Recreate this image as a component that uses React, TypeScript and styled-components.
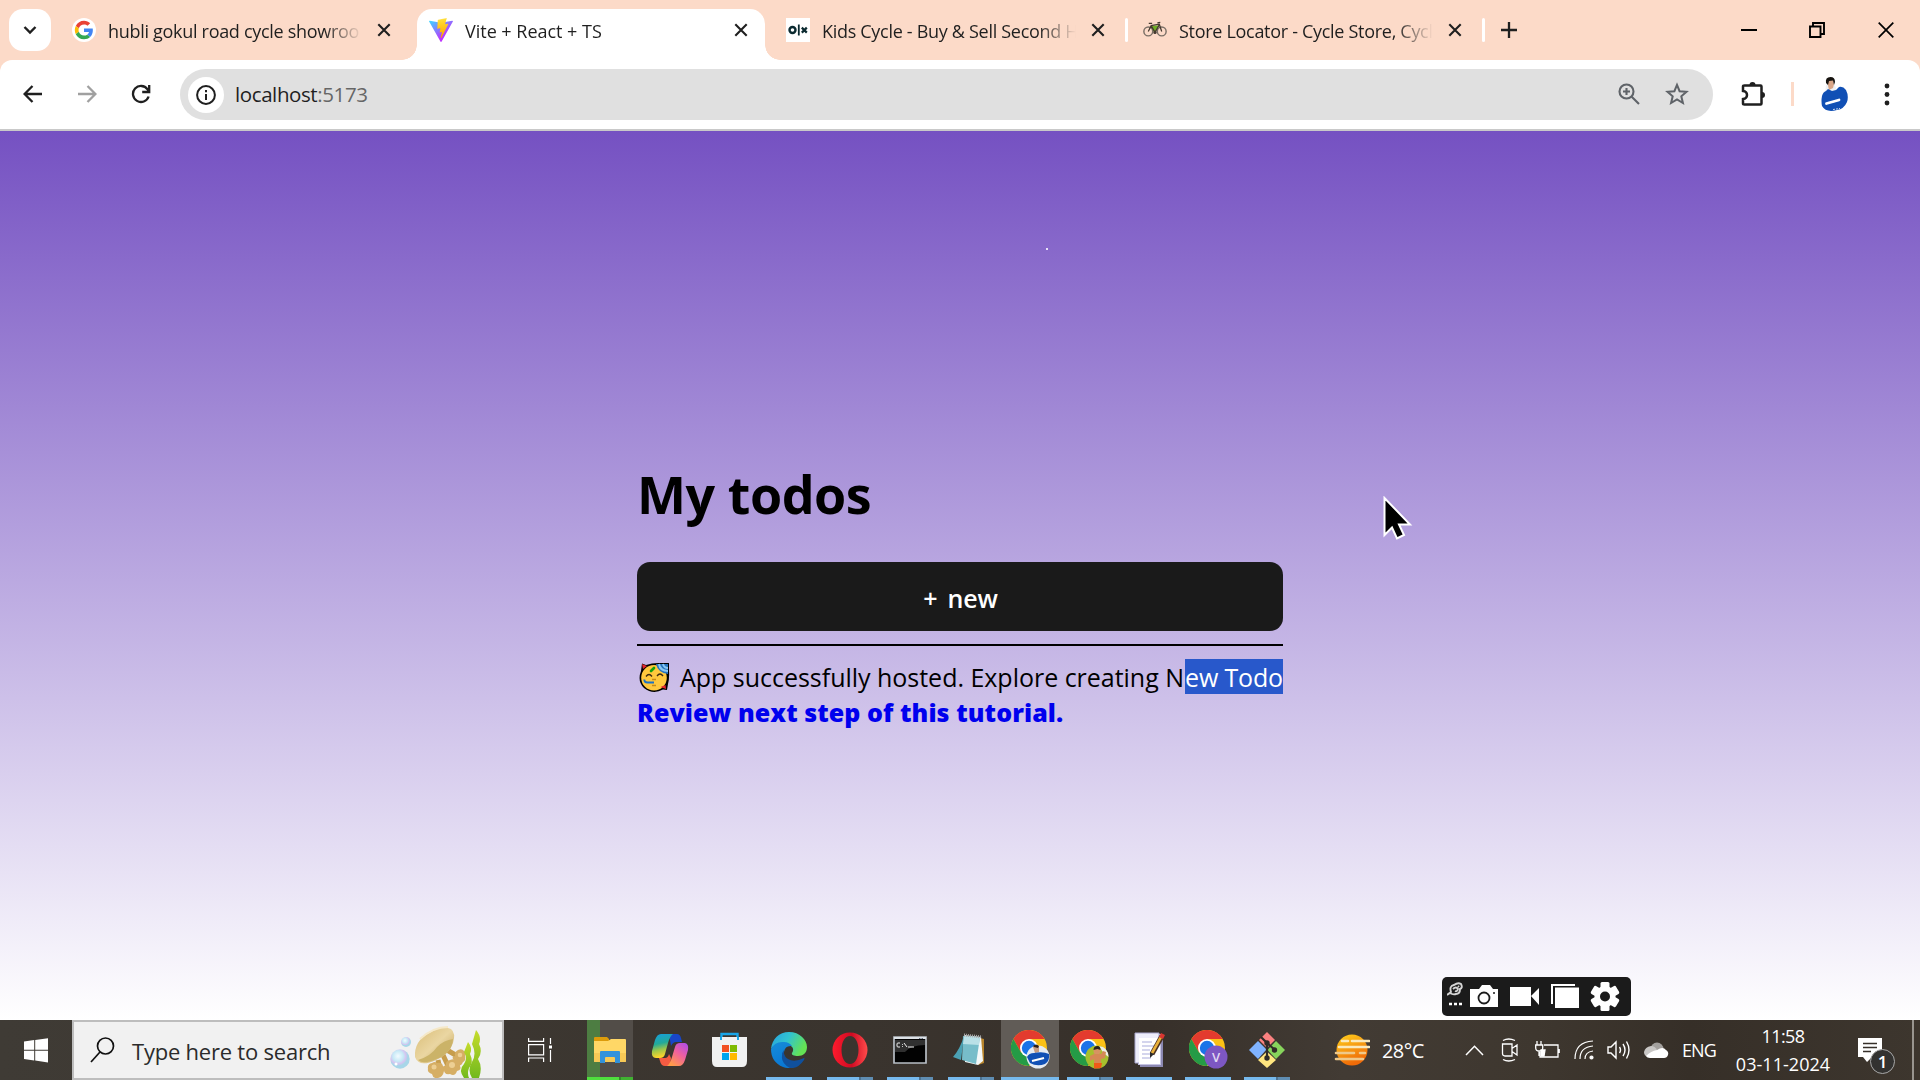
import React from "react";
import styled, { createGlobalStyle } from "styled-components";

const GlobalStyle = createGlobalStyle`
  *, *::before, *::after { box-sizing: border-box; }
  body { margin: 0; overflow: hidden; }
  svg { display: block; flex: none; }
`;

const Screen = styled.div`
  display: flex;
  flex-direction: column;
  width: 1920px;
  height: 1080px;
  overflow: hidden;
  font-family: "Open Sans", "Noto Sans", sans-serif;
  color: #1f1f1f;
`;

/* ---------- tab strip ---------- */

const TabStrip = styled.header`
  display: flex;
  height: 60px;
  padding-left: 9px;
  background: #fcdac8;
`;

const TabSearch = styled.button`
  display: grid;
  place-items: center;
  width: 42px;
  height: 42px;
  margin: 9px 9px 0 0;
  padding: 0;
  border: 0;
  border-radius: 14px;
  background: #fff;
`;

const TabSlot = styled.div<{ $active?: boolean }>`
  position: relative;
  display: flex;
  align-items: center;
  width: ${(p) => (p.$active ? 348 : 357)}px;
  height: 51px;
  margin: 9px ${(p) => (p.$active ? 9 : 0)}px 0 0;
  padding: 0 0 9px 12px;
  border-radius: 15px 15px 0 0;
  background: ${(p) => (p.$active ? "#fff" : "transparent")};
  ${(p) =>
    p.$active &&
    `
    &::before, &::after {
      content: "";
      position: absolute;
      bottom: 0;
      width: 15px;
      height: 15px;
    }
    &::before { left: -15px; background: radial-gradient(circle at 0 0, transparent 14.5px, #fff 15px); }
    &::after { right: -15px; background: radial-gradient(circle at 100% 0, transparent 14.5px, #fff 15px); }
  `}
`;

const TabTitle = styled.span<{ $spacing: number }>`
  width: 254px;
  margin: 2px 15px 0 12px;
  overflow: hidden;
  white-space: nowrap;
  font-size: 18px;
  line-height: 26px;
  letter-spacing: ${(p) => p.$spacing}px;
  mask-image: linear-gradient(90deg, #000 216px, transparent 254px);
`;

const TabDivider = styled.i`
  width: 3px;
  height: 24px;
  margin-left: 20px;
  border-radius: 2px;
  background: #fff;
`;

const NewTab = styled.div`
  display: grid;
  place-items: center;
  width: 42px;
  height: 42px;
  margin-top: 9px;
`;

const WindowButtons = styled.div`
  display: flex;
  margin-left: auto;
`;

const WindowButton = styled.div`
  display: grid;
  place-items: center;
  width: 68.5px;
  height: 59px;
`;

/* ---------- toolbar ---------- */

const ToolbarBack = styled.div`
  background: #fcdac8;
`;

const Toolbar = styled.nav`
  display: flex;
  align-items: center;
  height: 71px;
  padding: 0 0 2px;
  border-bottom: 2px solid #c9c9c9;
  border-radius: 12px 12px 0 0;
  background: #fff;
`;

const NavButtons = styled.div`
  display: flex;
  width: 180px;
  padding: 1px 0 0 6px;
`;

const NavButton = styled.div`
  display: grid;
  place-items: center;
  width: 54px;
  height: 54px;
`;

const AddressBar = styled.div`
  display: flex;
  align-items: center;
  width: 1533px;
  height: 51px;
  margin-top: 2px;
  padding: 0 24px 0 8px;
  border-radius: 26px;
  background: #e0e0e0;
`;

const SiteInfo = styled.div`
  display: grid;
  place-items: center;
  width: 36px;
  height: 36px;
  margin-right: 11px;
  border-radius: 50%;
  background: #fff;
`;

const Url = styled.span`
  flex: 1;
  margin-top: -2px;
  font-size: 20.5px;
  letter-spacing: -0.4px;
  line-height: 30px;
  em { font-style: normal; color: #666; }
`;

const AddressIcons = styled.div`
  display: flex;
  gap: 24px;
  margin-top: -1px;
`;

const ToolbarEnd = styled.div`
  display: flex;
  align-items: center;
  margin-left: 27px;
`;

const ToolbarDivider = styled.i`
  width: 3px;
  height: 24px;
  margin: 0 26px 0 25px;
  background: #fcdac8;
`;

/* ---------- page ---------- */

const Page = styled.main`
  position: relative;
  height: 889px;
  padding-top: 328px;
  background: linear-gradient(180deg, rgb(117, 81, 194), rgb(255, 255, 255));
  color: #000;
`;

const Todos = styled.section`
  display: flex;
  flex-direction: column;
  width: 646px;
  margin: 0 auto;
`;

const Heading = styled.h1`
  margin: 0 0 33px;
  font-size: 52px;
  font-weight: 700;
  line-height: 70px;
  letter-spacing: -0.45px;
`;

const NewButton = styled.button`
  height: 69px;
  margin-bottom: 13px;
  padding: 2px 0 0 1px;
  border: 0;
  border-radius: 13px;
  background: #1a1a1a;
  color: #fff;
  font: 600 25px/36px "Open Sans", sans-serif;
  letter-spacing: -0.1px;
  span { margin-right: 10px; }
`;

const Rule = styled.hr`
  width: 100%;
  height: 2px;
  margin: 0 0 13px;
  border: 0;
  background: #000;
`;

const Message = styled.div`
  display: flex;
  height: 35px;
  font-size: 25px;
  line-height: 37px;
  letter-spacing: -0.02px;
  white-space: pre;
  svg { margin: 3px 10px 0 2px; }
`;

const Selected = styled.span`
  width: 98px;
  margin-left: auto;
  background: #2858cb;
  color: #fff;
  letter-spacing: -0.15px;
`;

const Tutorial = styled.a`
  height: 35px;
  color: #0000ee;
  font-size: 25px;
  font-weight: 800;
  line-height: 37px;
  white-space: nowrap;
  letter-spacing: 0.07px;
`;

const Speck = styled.i`
  position: absolute;
  left: 1046px;
  top: 117px;
  width: 2px;
  height: 2px;
  background: #e9e2f7;
`;

const Cursor = styled.svg`
  position: absolute;
  left: 1383px;
  top: 365px;
`;

const Recorder = styled.div`
  position: absolute;
  left: 1442px;
  top: 846px;
  display: flex;
  align-items: center;
  width: 189px;
  height: 39px;
  padding-left: 5px;
  border-radius: 5px;
  background: #1b1b1b;
`;

/* ---------- taskbar ---------- */

const Taskbar = styled.footer`
  display: flex;
  height: 60px;
  background: linear-gradient(90deg, #3f3b35, #3a342e 45%, #37302a 60%, #423b34 70%, #3e372f 80%, #362f28 88%, #3d362e);
  color: #fff;
`;

const Start = styled.div`
  display: grid;
  place-items: center;
  width: 72px;
  height: 60px;
`;

const SearchBox = styled.div`
  display: flex;
  align-items: center;
  width: 432px;
  height: 60px;
  padding-left: 16px;
  border: 2px solid #bdbdbd;
  background: #f1f1f1;
  color: #2b2b2b;
`;

const SearchText = styled.span`
  width: 258px;
  margin: 1px 0 0 17px;
  font-size: 22px;
  line-height: 32px;
  letter-spacing: -0.22px;
  white-space: nowrap;
`;

const TaskView = styled.div`
  display: grid;
  place-items: center;
  width: 72px;
  margin-right: 4px;
`;

const TaskCell = styled.div<{ $width: number; $active?: boolean }>`
  display: flex;
  flex-direction: column;
  align-items: center;
  justify-content: space-between;
  width: ${(p) => p.$width}px;
  height: 60px;
  background: ${(p) => (p.$active ? "#615c57" : "transparent")};
`;

const FolderCell = styled(TaskCell)`
  margin: 0 7px;
  background: linear-gradient(90deg, #4d7d42 13px, #524d48 13px);
`;

const AppIcon = styled.div`
  display: grid;
  place-items: center;
  height: 57px;
  padding-top: 3px;
`;

const Underline = styled.i<{ $kind: "none" | "one" | "many" | "full" | "green" }>`
  width: ${(p) => (p.$kind === "full" ? 58 : 46)}px;
  height: 3px;
  background: ${(p) =>
    ({
      none: "transparent",
      one: "#76b9ed",
      full: "#76b9ed",
      many: "linear-gradient(90deg, #76b9ed 32px, #4c7291 32px, #4c7291 34px, #5f8db2 34px)",
      green: "linear-gradient(90deg, #4fdf3e 32px, #338c2a 32px, #338c2a 34px, #40b232 34px)",
    })[p.$kind]};
`;

const Weather = styled.div`
  display: flex;
  align-items: center;
  gap: 12px;
  margin-left: 38px;
  width: 131px;
  font-size: 20px;
  letter-spacing: -0.6px;
  white-space: nowrap;
`;

const Tray = styled.div`
  display: flex;
  align-items: center;
  gap: 13.5px;
  width: 217px;
`;

const Language = styled.span`
  width: 54px;
  font-size: 18px;
  line-height: 60px;
  letter-spacing: -0.9px;
`;

const Clock = styled.div`
  display: flex;
  flex-direction: column;
  width: 94px;
  align-items: center;
  padding-top: 2px;
  font-size: 18px;
  line-height: 28px;
  letter-spacing: -0.6px;
  white-space: nowrap;
`;

const DateText = styled.span`
  letter-spacing: 0.05px;
`;

const Notifications = styled.div`
  position: relative;
  margin: 18px 0 0 28px;
`;

const Badge = styled.span`
  position: absolute;
  left: 12px;
  top: 11px;
  display: grid;
  place-items: center;
  width: 25px;
  height: 25px;
  border: 1px solid #a8a8a8;
  border-radius: 50%;
  background: #333230;
  font-size: 17px;
  font-weight: 600;
`;

const DesktopEdge = styled.i`
  width: 2px;
  height: 60px;
  margin: 0 6px 0 auto;
  background: #99958f;
`;

/* ---------- drawings ---------- */

const Close = () => (
  <svg width="14" height="14" viewBox="0 0 14 14" stroke="#1f1f1f" strokeWidth="2.1">
    <path d="M1.3 1.3 12.7 12.7M12.7 1.3 1.3 12.7" />
  </svg>
);

const GoogleIcon = () => (
  <svg width="24" height="24" viewBox="0 0 24 24">
    <circle cx="12" cy="12" r="12" fill="#fff" />
    <g transform="translate(2.8 2.8) scale(.384)">
      <path fill="#EA4335" d="M24 9.5c3.54 0 6.71 1.22 9.21 3.6l6.85-6.85C35.9 2.38 30.47 0 24 0 14.62 0 6.51 5.38 2.56 13.22l7.98 6.19C12.43 13.72 17.74 9.5 24 9.5z" />
      <path fill="#4285F4" d="M46.98 24.55c0-1.57-.15-3.09-.38-4.55H24v9.02h12.94c-.58 2.96-2.26 5.48-4.78 7.18l7.73 6c4.51-4.18 7.09-10.36 7.09-17.65z" />
      <path fill="#FBBC05" d="M10.53 28.59c-.48-1.45-.76-2.99-.76-4.59s.27-3.14.76-4.59l-7.98-6.19C.92 16.46 0 20.12 0 24c0 3.88.92 7.54 2.56 10.78l7.97-6.19z" />
      <path fill="#34A853" d="M24 48c6.48 0 11.93-2.13 15.89-5.81l-7.73-6c-2.15 1.45-4.92 2.3-8.16 2.3-6.26 0-11.57-4.22-13.47-9.91l-7.98 6.19C6.51 42.62 14.62 48 24 48z" />
    </g>
  </svg>
);

const ViteIcon = () => (
  <svg width="24" height="24" viewBox="0 0 256 257">
    <defs>
      <linearGradient id="viteA" x1="0" x2=".58" y1=".08" y2=".78">
        <stop offset="0" stopColor="#41D1FF" />
        <stop offset="1" stopColor="#BD34FE" />
      </linearGradient>
      <linearGradient id="viteB" x1=".43" x2=".5" y1=".02" y2=".89">
        <stop offset="0" stopColor="#FFEA83" />
        <stop offset=".08" stopColor="#FFDD35" />
        <stop offset="1" stopColor="#FFA800" />
      </linearGradient>
    </defs>
    <path fill="url(#viteA)" d="M255.153 37.938 134.897 252.976c-2.483 4.44-8.862 4.466-11.382.048L.875 37.958c-2.746-4.814 1.371-10.646 6.827-9.67l120.385 21.517a6.537 6.537 0 0 0 2.322-.004l117.867-21.483c5.438-.991 9.574 4.796 6.877 9.62Z" />
    <path fill="url(#viteB)" d="M185.432.063 96.44 17.501a3.268 3.268 0 0 0-2.634 3.014l-5.474 92.456a3.268 3.268 0 0 0 3.997 3.378l24.777-5.718c2.318-.535 4.413 1.507 3.936 3.838l-7.361 36.047c-.495 2.426 1.782 4.5 4.151 3.78l15.304-4.649c2.372-.72 4.652 1.36 4.15 3.788l-11.698 56.621c-.732 3.542 3.979 5.473 5.943 2.437l1.313-2.028 72.516-144.72c1.215-2.423-.88-5.186-3.54-4.672l-25.505 4.922c-2.396.462-4.435-1.77-3.759-4.114l16.646-57.705c.677-2.35-1.37-4.583-3.769-4.113Z" />
  </svg>
);

const OlxIcon = () => (
  <svg width="24" height="24" viewBox="0 0 24 24">
    <path fill="#fff" d="M0 0h24v24H0z" />
    <circle cx="6.5" cy="12" r="3" fill="none" stroke="#0b2a30" strokeWidth="2.4" />
    <path d="M12.8 6.5v11" stroke="#0b2a30" strokeWidth="1.8" />
    <path d="m15.8 9.6 5 5m0-5-5 5" stroke="#0b2a30" strokeWidth="2.2" />
  </svg>
);

const BikeIcon = () => (
  <svg width="24" height="24" viewBox="0 0 25 24" fill="none">
    <circle cx="5.5" cy="13.5" r="4.6" stroke="#7a6f66" strokeWidth="1.5" />
    <circle cx="19.5" cy="13.5" r="4.6" stroke="#7a6f66" strokeWidth="1.5" />
    <path d="m8 8 9-1-5 8z" fill="#6fae24" />
    <path d="m5.500 13.500 3-6 8.500-1.500 2.500 7.500M8.500 7.500l4 7 4.500-8M6 5h3.500M15 4.500l3-.5" stroke="#45392f" strokeWidth="1.300" />
    <circle cx="12.500" cy="14.500" r="1.700" fill="#45392f" />
  </svg>
);

const Avatar = () => (
  <svg width="28" height="36" viewBox="0 0 28 36">
    <path d="M6 9q6-6 10 3v6H5z" fill="#eef1f5" />
    <path d="M7 5q3-4 6-1l1 4-1 4-4 2z" fill="#d9a688" />
    <path d="M6 7q-1-6 4.500-6Q15 1 15 6l-1 3-1-4.500L9 5 8 9z" fill="#16130f" />
    <path d="M2 20q1-4 4-5l2-2 4 2 4-1 3-3q4-1 7 3 3 6 1 12-3 7-10 8-11 3-15-4-1-5 0-10z" fill="#1150b5" />
    <path d="m6.500 27.500 12.500-3.500" stroke="#fff" strokeWidth="2.800" strokeLinecap="round" />
    <path d="m13 33.500 7-1" stroke="#c9d8ef" strokeWidth="1" strokeDasharray="2 1" />
  </svg>
);

const PartyFace = () => (
  <svg width="31" height="31" viewBox="0 0 31 31">
    <path d="M3 1.500 7 3Q14 .500 22 1h8v8q.500 8-1 13l-1 6-4-.500Q14 33 5 26-2 19 2 9z" fill="#000" />
    <circle cx="15" cy="15.800" r="12.800" fill="#ffc83d" />
    <path d="m3 2 5 2-4 3zM21.500 25l5-2 .500 4z" fill="#e6262d" />
    <path d="M17 2h12v10Q19 11 17 2z" fill="#2673bd" />
    <path d="M20 2q1 7 9 7M24 2q1 4 5 4" stroke="#8bc7f0" strokeWidth="2" fill="none" />
    <path d="m12 9 3-3" stroke="#13a10e" strokeWidth="2.600" strokeLinecap="round" />
    <path d="M7 14.500q3-4 6 0M18 14q3-4 6 0" stroke="#3d2b12" strokeWidth="1.300" fill="none" />
    <path d="M15 20.500H8.500q-3.500 0-3-3" stroke="#1c72c4" strokeWidth="2" fill="none" />
    <path d="M13 17.500h4M13 23.500h4" stroke="#c88a15" strokeWidth="1.300" />
  </svg>
);

const SearchArt = () => (
  <svg width="92" height="56" viewBox="0 0 92 56">
    <defs>
      <radialGradient id="bubble" cx=".4" cy=".35">
        <stop offset="0" stopColor="#f3fbff" />
        <stop offset=".55" stopColor="#c6e9f6" />
        <stop offset=".8" stopColor="#d5c4f0" />
        <stop offset="1" stopColor="#a7d6e8" />
      </radialGradient>
      <linearGradient id="cap" x2="1" y2="1">
        <stop stopColor="#d9bc75" />
        <stop offset=".5" stopColor="#ead6a2" />
        <stop offset="1" stopColor="#bd9c50" />
      </linearGradient>
      <linearGradient id="weed" y2="1" x2="0">
        <stop stopColor="#c6dc2c" />
        <stop offset="1" stopColor="#72b91e" />
      </linearGradient>
    </defs>
    <circle cx="10" cy="37" r="9.700" fill="url(#bubble)" />
    <circle cx="16" cy="20" r="5" fill="url(#bubble)" />
    <circle cx="6" cy="42" r="1.500" fill="#fff" />
    <path d="m48 38 2 10M53 33l6 13M57 28l17 10" stroke="#c79d4c" strokeWidth="5" />
    <path d="M25 35q-1-16 14-24 13-8 22-4 5 4 2 14-4 12-17 17-17 8-21-3z" fill="url(#cap)" />
    <path d="M28 38q13-4 19-13 7-7 16-8-1 14-17 20-13 6-18 1z" fill="#cbb368" />
    <path d="M30 17Q43 5 58 5" stroke="#f5e8c8" strokeWidth="2" fill="none" />
    <g fill="#d6ae64">
      <path d="M42 41q3-2 5 0 5-1 6 3 4 2 1 5-1 6-6 7-5 1-6-4-5-2-4-5-1-5 4-6z" />
      <path d="M60 38q4-2 7 1 4 1 3 5 2 4-3 5-2 6-7 3-6 1-6-4-2-4 2-5-1-4 4-5z" />
      <path d="M68 28q4-2 6 1 3 2 1 5 1 5-2 6-2 5-6 3l-2-4q-5-4 0-5-1-4 3-6z" />
    </g>
    <g fill="#edcf93">
      <circle cx="44" cy="45" r="2.500" /><circle cx="62" cy="43" r="3" /><circle cx="70" cy="33" r="2.300" />
    </g>
    <path d="M74 56q-6-8 0-14 4-6 0-12l4-10q5 6 2 12 4 8-1 14-2 5 0 10z" fill="url(#weed)" />
    <path d="M82 56q-5-8 0-16t0-18l4-14q6 7 3 14 4 8-1 15 5 8 1 19z" fill="url(#weed)" />
  </svg>
);

const FolderIcon = () => (
  <svg width="34" height="30" viewBox="0 0 34 30">
    <path d="M1 3q0-1 1-1h12l2 2v4H1z" fill="#dc9b0b" />
    <path d="M1 6h14l3-2h14q1 0 1 1v21q0 1-1 1H2q-1 0-1-1z" fill="#ffd766" />
    <path d="M1 18v8q0 1 1 1h30q1 0 1-1v-8z" fill="#f7c956" />
    <path d="M7 28V17q0-1 1-1h18q1 0 1 1v11h-5v-5q0-1-1-1h-8q-1 0-1 1v5z" fill="#3292dc" />
  </svg>
);

const CopilotIcon = () => (
  <svg width="38" height="36" viewBox="0 0 38 36">
    <defs>
      <linearGradient id="copA" x2=".2" y2="1">
        <stop stopColor="#169de1" /><stop offset=".45" stopColor="#22aa99" /><stop offset=".7" stopColor="#9bc64b" /><stop offset="1" stopColor="#ffd52a" />
      </linearGradient>
      <linearGradient id="copB" x1="1" x2=".3" y2="1">
        <stop stopColor="#a84bef" /><stop offset=".5" stopColor="#ef609f" /><stop offset="1" stopColor="#ff9b49" />
      </linearGradient>
    </defs>
    <path d="M18 2h8q3 0 4 4l1 4h-6q-3 0-5 4z" fill="#1846c8" />
    <path d="M10 2h12q-3 2-5 9l-3 11q-1 4-5 4H5q-5 0-4-7l3-11q2-6 6-6z" fill="url(#copA)" />
    <path d="M19 34h-5q-4 0-5-5l-1-3h6q3 0 4-4l2 4z" fill="#f45b42" />
    <path d="M28 34H16q3-2 5-9l3-10q1-4 5-4h5q4 1 3 7l-3 10q-2 6-6 6z" fill="url(#copB)" />
  </svg>
);

const StoreIcon = () => (
  <svg width="35" height="36" viewBox="0 0 35 36">
    <path d="M9.500 8V2h16v6" fill="none" stroke="#18a5e8" strokeWidth="2.400" />
    <path d="M0 5h35v24q0 6-5 6H5q-5 0-5-6z" fill="#f1f1f1" />
    <path d="M9 5v3M26 5v3" stroke="#18a5e8" strokeWidth="2" />
    <path d="M10 13h7v7h-7z" fill="#f25022" /><path d="M18 13h7v7h-7z" fill="#7fba00" />
    <path d="M10 21h7v7h-7z" fill="#00a4ef" /><path d="M18 21h7v7h-7z" fill="#ffb900" />
  </svg>
);

const EdgeIcon = () => (
  <svg width="36" height="36" viewBox="0 0 36 36">
    <defs>
      <linearGradient id="edgeA" x2="1" y2=".4"><stop stopColor="#269fe0" /><stop offset=".5" stopColor="#31c3d0" /><stop offset="1" stopColor="#64e255" /></linearGradient>
      <linearGradient id="edgeB" y2="1" x2=".4"><stop stopColor="#168cd9" /><stop offset="1" stopColor="#0a78d4" /></linearGradient>
    </defs>
    <path d="M0 17C1 7 8 0 18 0c11 0 18 8 18 15 0 6-4 9-9 9-4 0-7-1-6-3 3-4 0-8-5-8Q5 9 0 17z" fill="url(#edgeA)" />
    <path d="M0 17q4-8 13-7 5 0 8 4-7-1-8 6-1 9 9 15-5 2-10 0Q0 30 0 17z" fill="url(#edgeB)" />
    <path d="M13 18q-1 6 4 9 6 4 16-1 1-1 0 2-6 9-14 8Q10 31 11 24q0-4 2-6z" fill="#10509c" />
  </svg>
);

const OperaIcon = () => (
  <svg width="36" height="36" viewBox="0 0 36 36">
    <defs><linearGradient id="opera" x2="1"><stop stopColor="#ff1b2d" /><stop offset=".55" stopColor="#cf0b23" /><stop offset="1" stopColor="#ff4b4b" /></linearGradient></defs>
    <path fillRule="evenodd" d="M18 .5a17.500 17.500 0 1 0 0 35 17.500 17.500 0 1 0 0-35zM18 4c5 0 8.500 6 8.500 14S23 32 18 32 9.500 26 9.500 18 13 4 18 4z" fill="url(#opera)" />
  </svg>
);

const TerminalIcon = () => (
  <svg width="34" height="28" viewBox="0 0 34 28">
    <path d="M1 1h32v26H1z" fill="#020202" stroke="#b8bec5" strokeWidth="1.700" />
    <path d="M1 1h32v2H1z" fill="#dce1e6" />
    <path d="M2 4h30v5q-14 0-20 7H2z" fill="#303030" />
    <path d="M26 2.500h5" stroke="#657080" strokeDasharray="1.500 1" />
    <path d="M7 7H5q-1 0-1 1v2q0 1 1 1h2M9.500 8v.8M9.500 10v.8M11 7l3 4M15 11h6" stroke="#eee" strokeWidth="1" fill="none" />
  </svg>
);

const NotepadIcon = () => (
  <svg width="36" height="34" viewBox="1 0 36 34">
    <path d="m28 5 4 1v24l-6 2z" fill="#b7842c" />
    <path d="m12 2 17 2 2 24-5 4-13-3z" fill="#f4f8f9" />
    <path d="m11 3 17 1-4 27-14-4z" fill="#77bdca" />
    <path d="M12 3 9 27l-8-3Q8 16 12 3z" fill="#4ba1b4" />
    <path d="m12 3 16 1-1 8-16-1z" fill="#bae0e7" />
    <path d="m12 2 18 2" stroke="#a7a7a7" strokeWidth="3" strokeDasharray="1 1" />
  </svg>
);

const ChromeIcon = ({ badge }: { badge: "skate" | "hero" | "v" }) => (
  <svg width="39" height="40" viewBox="0 0 39 40">
    <circle cx="18" cy="18" r="18" fill="#fbc116" />
    <path d="M2.400 9A18 18 0 0 1 33.600 9H18L10 22.500z" fill="#e33b2e" />
    <path d="M2.400 9A18 18 0 0 0 18 36l8-13.500H10z" fill="#259b46" />
    <circle cx="18" cy="18" r="9" fill="#fff" />
    <circle cx="18" cy="18" r="7.200" fill="#1a73e8" />
    {badge === "skate" && (
      <g>
        <circle cx="27" cy="27" r="11.500" fill="#e6ebf2" />
        <path d="M22 17q3-4 6 0v5l-4 1z" fill="#c69b80" />
        <path d="M22 16q3-3 6 0l-1 2-4-1z" fill="#2a211c" />
        <path d="M16 27q2-4 7-4 9-2 15 1 1 7-4 10-8 3-15-1z" fill="#1150b5" />
        <path d="m21 31 12-3" stroke="#fff" strokeWidth="2" />
      </g>
    )}
    {badge === "hero" && (
      <g>
        <circle cx="27" cy="27" r="11.500" fill="#a6bf2e" />
        <path d="M29 16q9 1 9.500 11l-5-4z" fill="#eceee9" />
        <circle cx="27" cy="21" r="3.500" fill="#d79462" />
        <path d="M23.500 20q0-4 4-4 3 0 3 4l-3-1z" fill="#2a211c" />
        <path d="m20 26 4-2h7l2-3 3 1-1 6-4 1v4h-7v-4l-4 2z" fill="#d58955" />
        <path d="M24 33h8l-1 5-7 .5z" fill="#ef5a17" />
      </g>
    )}
    {badge === "v" && (
      <g>
        <circle cx="27" cy="27" r="11.500" fill="#7d57c2" />
        <text x="27" y="32" textAnchor="middle" fontSize="13" fontWeight="600" fontFamily="Open Sans, sans-serif" fill="#e2d9f2">V</text>
      </g>
    )}
  </svg>
);

const NotesIcon = () => (
  <svg width="31" height="36" viewBox="0 0 31 36">
    <path d="M6 4h23v31H6z" fill="#8b88b1" />
    <path d="M4 2h23v31H4z" fill="#c5c3e2" />
    <path d="M1 1h24v30H1z" fill="#eeeefb" stroke="#aaa8cf" />
    <path d="M5 6h21v26H5z" fill="#fff" />
    <path d="M8 10h10M8 14h12M8 18h8M8 22h12M8 26h9" stroke="#c6c7e7" strokeWidth="1.500" />
    <path d="M28 4 18 22" stroke="#4a3020" strokeWidth="5" />
    <path d="M27.500 4 17.500 22" stroke="#e9b03a" strokeWidth="2.600" />
    <path d="m29 2-2 4" stroke="#d73630" strokeWidth="4.500" />
    <path d="m16 20 4 2-4 4z" fill="#2b2b2b" />
  </svg>
);

const GitIcon = () => (
  <svg width="36" height="36" viewBox="0 0 36 36">
    <path d="m18 0 8 8-8 8-8-8z" fill="#fa8180" />
    <path d="m9 9 8.500 8.500L9 27 0 18z" fill="#80b3ff" />
    <path d="m27 9 9 9-9 9-8.500-9z" fill="#87d45c" />
    <path d="m18 19.500 9 8.500-9 8-9-8z" fill="#ffe680" />
    <path d="m12 5 6 6v15M18 11l8 7" stroke="#302b28" strokeWidth="2.200" fill="none" />
    <circle cx="18" cy="11" r="2.700" fill="#302b28" /><circle cx="25.500" cy="18" r="2.700" fill="#302b28" /><circle cx="18" cy="26" r="2.700" fill="#302b28" />
  </svg>
);

const WeatherIcon = () => (
  <svg width="36" height="32" viewBox="0 0 36 32">
    <defs><linearGradient id="sun" y2="1" x2=".4"><stop stopColor="#ffd11c" /><stop offset="1" stopColor="#ef6a08" /></linearGradient></defs>
    <circle cx="18" cy="16" r="15.500" fill="url(#sun)" />
    <path d="M8 7h6M18 7h17M5 13h30" stroke="#fbe9bb" strokeWidth="2.600" strokeLinecap="round" />
    <path d="M2 19h18M26 19h5M2 25h27" stroke="#efc98a" strokeWidth="2.600" strokeLinecap="round" />
  </svg>
);

const GearIcon = () => (
  <g fill="#fff">
    {[0, 60, 120].map((angle) => (
      <rect key={angle} x="153.500" y="5" width="9" height="29" rx="1.500" transform={`rotate(${angle} 158 19.500)`} />
    ))}
    <circle cx="158" cy="19.500" r="10.500" />
    <circle cx="158" cy="19.500" r="5" fill="#1b1b1b" />
  </g>
);

const tabs = [
  { title: "hubli gokul road cycle showroo", icon: <GoogleIcon />, spacing: -0.3 },
  { title: "Vite + React + TS", icon: <ViteIcon />, spacing: -0.02, active: true },
  { title: "Kids Cycle - Buy & Sell Second H", icon: <OlxIcon />, spacing: -0.3, divider: true },
  { title: "Store Locator - Cycle Store, Cycl", icon: <BikeIcon />, spacing: -0.3, divider: true },
];

const apps: { icon: React.ReactNode; line: "none" | "one" | "many" | "full"; width: number }[] = [
  { icon: <CopilotIcon />, line: "none", width: 60 },
  { icon: <StoreIcon />, line: "none", width: 58 },
  { icon: <EdgeIcon />, line: "one", width: 62 },
  { icon: <OperaIcon />, line: "many", width: 60 },
  { icon: <TerminalIcon />, line: "many", width: 60 },
  { icon: <NotepadIcon />, line: "many", width: 61 },
  { icon: <ChromeIcon badge="skate" />, line: "full", width: 58 },
  { icon: <ChromeIcon badge="hero" />, line: "many", width: 61 },
  { icon: <NotesIcon />, line: "one", width: 58 },
  { icon: <ChromeIcon badge="v" />, line: "one", width: 60 },
  { icon: <GitIcon />, line: "many", width: 58 },
];

export default function App() {
  return (
    <Screen>
      <GlobalStyle />
      <TabStrip>
        <TabSearch>
          <svg width="14" height="10" viewBox="0 0 14 10"><path d="m1.500 2 5.500 5.500L12.500 2" fill="none" stroke="#1f1f1f" strokeWidth="2.400" /></svg>
        </TabSearch>
        {tabs.map((tab) => (
          <TabSlot key={tab.title} $active={tab.active}>
            {tab.icon}
            <TabTitle $spacing={tab.spacing}>{tab.title}</TabTitle>
            <Close />
            {tab.divider && <TabDivider />}
          </TabSlot>
        ))}
        <NewTab>
          <svg width="18" height="18" viewBox="0 0 18 18"><path d="M9 1v16M1 9h16" stroke="#1f1f1f" strokeWidth="2.300" /></svg>
        </NewTab>
        <WindowButtons>
          <WindowButton><svg width="16" height="2"><path d="M0 0h16v2H0z" /></svg></WindowButton>
          <WindowButton>
            <svg width="16" height="16" viewBox="0 0 16 16" fill="none" stroke="#000" strokeWidth="1.900"><path d="M1 4.500h10.500V15H1zM4 4V1h11v11h-3" /></svg>
          </WindowButton>
          <WindowButton>
            <svg width="16" height="16" viewBox="0 0 16 16" stroke="#000" strokeWidth="1.700"><path d="m.7.700 14.600 14.600M15.300.7.700 15.300" /></svg>
          </WindowButton>
        </WindowButtons>
      </TabStrip>

      <ToolbarBack>
        <Toolbar>
          <NavButtons>
            <NavButton>
              <svg width="20" height="18" viewBox="0 0 20 18" fill="none" stroke="#1f1f1f" strokeWidth="2.300"><path d="M19 9H2M9.500 1 1.600 9l7.900 8" /></svg>
            </NavButton>
            <NavButton>
              <svg width="20" height="18" viewBox="0 0 20 18" fill="none" stroke="#a0a0a0" strokeWidth="2.300"><path d="M1 9h17M10.500 1l7.900 8-7.900 8" /></svg>
            </NavButton>
            <NavButton>
              <svg width="20" height="20" viewBox="0 0 20 20" fill="none" stroke="#1f1f1f" strokeWidth="2.300"><path d="M17.600 12.500A8 8 0 1 1 16.500 5.300L18 7.500M18.200 1v7h-7" /></svg>
            </NavButton>
          </NavButtons>
          <AddressBar>
            <SiteInfo>
              <svg width="20" height="20" viewBox="0 0 20 20"><circle cx="10" cy="10" r="8.900" fill="none" stroke="#1f1f1f" strokeWidth="2" /><path d="M10 9v6M10 5v2.200" stroke="#1f1f1f" strokeWidth="2" /></svg>
            </SiteInfo>
            <Url>localhost<em>:5173</em></Url>
            <AddressIcons>
              <svg width="24" height="24" viewBox="0 0 24 24" fill="none" stroke="#5f6368" strokeWidth="2.100"><circle cx="9.500" cy="9.500" r="7" /><path d="m14.700 14.700 7.300 7.300M9.500 6v7M6 9.500h7" /></svg>
              <svg width="24" height="24" viewBox="0 0 24 24" fill="none" stroke="#5f6368" strokeWidth="2"><path d="m12 2.800 2.600 6.400 6.900.6-5.200 4.500 1.600 6.700-5.900-3.600L6.100 21l1.600-6.700-5.200-4.500 6.900-.6z" /></svg>
            </AddressIcons>
          </AddressBar>
          <ToolbarEnd>
            <svg width="26" height="27" viewBox="0 0 26 27">
              <path d="M4.500 5.500h16q1 0 1 1v17q0 1-1 1h-16q-1.500 0-1.500-1V19q4-.5 4-4t-4-4V6.500q0-1 1.500-1z" fill="none" stroke="#1f1f1f" strokeWidth="2.500" />
              <path d="M9.500 5a3 3 0 0 1 6 0zM22 12a3 3 0 0 1 0 6z" fill="#1f1f1f" />
            </svg>
            <ToolbarDivider />
            <Avatar />
            <svg width="70" height="30" viewBox="0 0 70 30" fill="#1f1f1f"><circle cx="39" cy="7" r="2.400" /><circle cx="39" cy="15.500" r="2.400" /><circle cx="39" cy="24" r="2.400" /></svg>
          </ToolbarEnd>
        </Toolbar>
      </ToolbarBack>

      <Page>
        <Todos>
          <Heading>My todos</Heading>
          <NewButton><span>+</span>new</NewButton>
          <Rule />
          <Message>
            <PartyFace />
            <span>App successfully hosted. Explore creating N</span>
            <Selected>ew Todo</Selected>
          </Message>
          <Tutorial>Review next step of this tutorial.</Tutorial>
        </Todos>
        <Speck />
        <Cursor width="32" height="46" viewBox="0 0 32 46">
          <path d="M1.500 2v37l7.500-7.500 5 11 7-3.500-5-10.500h11z" fill="#000" stroke="#fff" strokeWidth="2" />
        </Cursor>
        <Recorder>
          <svg width="184" height="39" viewBox="0 0 184 39">
            <path d="m0 18 4-3q-2-6 3-7 4-3 7-1 2 4-1 5 0 5-4 5-3 1-6-1zM6 12q3-3 5 0-1 3-3 2M11 9l1 1" fill="none" stroke="#d5d5d5" strokeWidth="1.900" />
            <path d="M2 27h13" stroke="#fff" strokeWidth="2.400" strokeDasharray="3 2" />
            <path d="M23 12h9l3-4h8l3 4h5v18H23z" fill="#fff" />
            <circle cx="37" cy="21" r="5.500" fill="#fff" stroke="#1b1b1b" strokeWidth="1.800" /><circle cx="47" cy="16" r="1" fill="#1b1b1b" />
            <path d="M63 10h21v19H63zM84 19l8-8v17z" fill="#fff" />
            <path d="M104 7h24v2h-22v18h-2z" fill="#fff" /><path d="M108 10.500h24v20.500h-24z" fill="#fff" />
            <GearIcon />
          </svg>
        </Recorder>
      </Page>

      <Taskbar>
        <Start>
          <svg width="24" height="25" viewBox="0 0 24 25" fill="#fff"><path d="m0 3.500 10.200-1.400v9.700H0zM11.200 2 24 .2v11.600H11.200zM0 12.800h10.200v9.700L0 21.100zM11.200 12.800H24v11.600l-12.800-1.800z" /></svg>
        </Start>
        <SearchBox>
          <svg width="25" height="26" viewBox="0 0 25 26" fill="none" stroke="#111" strokeWidth="1.700"><circle cx="15.500" cy="9" r="8" /><path d="M10 15 1 25" /></svg>
          <SearchText>Type here to search</SearchText>
          <SearchArt />
        </SearchBox>
        <TaskView>
          <svg width="24" height="24" viewBox="0 0 24 24" fill="none" stroke="#fff" strokeWidth="1.200"><path d="M.6 0v3.400h15V0M.6 6.600h15v10.200H.6zM.6 24v-4h15v4M22.500 0v6M22.500 12v12" /><path d="M21 7.500h3v3h-3z" fill="#fff" stroke="none" /></svg>
        </TaskView>
        <FolderCell $width={46}>
          <AppIcon><FolderIcon /></AppIcon>
          <Underline $kind="green" />
        </FolderCell>
        {apps.map((app, i) => (
          <TaskCell key={i} $width={app.width} $active={app.line === "full"}>
            <AppIcon>{app.icon}</AppIcon>
            <Underline $kind={app.line} />
          </TaskCell>
        ))}
        <Weather><WeatherIcon />28°C</Weather>
        <Tray>
          <svg width="19" height="11" viewBox="0 0 19 11" fill="none" stroke="#fff" strokeWidth="1.500"><path d="m1 10 8.500-8.700L18 10" /></svg>
          <svg width="24" height="24" viewBox="-2 0 24 24" fill="none" stroke="#fff" strokeWidth="1.300"><path d="M2.500 6h9.500v12H5q-2.500 0-2.500-2.500zM12 10.500l5-3.500v10l-5-3.500M3 2.500q5.500-3 12 0M3 21.500q5.500 3 12 0" /></svg>
          <svg width="25" height="20" viewBox="0 0 25 20" fill="none" stroke="#fff" strokeWidth="1.300"><path d="M9 5h14v12H5v-5M24.200 9v4M2 1v4M6 1v4M.7 5h7v3q0 3-3.500 3T.7 8zM4 11v5" /><path d="M6 10h4l-1 6H6z" fill="#fff" /></svg>
          <svg width="20" height="20" viewBox="0 0 20 20" fill="none" stroke="#fff" strokeWidth="1.200"><path d="M1 19Q1 2 19 1M6 19Q6 7 19 6M11 19q0-7 8-8" /><circle cx="17.500" cy="17.500" r="1.500" fill="#fff" /></svg>
          <svg width="23" height="20" viewBox="0 0 23 20" fill="none" stroke="#fff" strokeWidth="1.400"><path d="M1 7h3l5-5v16l-5-5H1zM12.500 7q2 3 0 6M16 4q4 6 0 12M19.500 1.500q5 8.500 0 17" /></svg>
          <svg width="25" height="17" viewBox="0 0 25 17"><circle cx="13" cy="7" r="6.500" fill="#a3a09d" /><path d="M7 4q4 0 6 4l-8 7H4q-4-1-4-5 1-5 7-6z" fill="#c9c7c5" /><path d="M2 14q5-5 11-6 6-4 9 0 3 2 2 5-1 3-4 3H6q-3 0-4-2z" fill="#fff" /></svg>
        </Tray>
        <Language>ENG</Language>
        <Clock><span>11:58</span><DateText>03-11-2024</DateText></Clock>
        <Notifications>
          <svg width="25" height="26" viewBox="0 0 25 26"><path d="M0 0h24v19H14l-5 5-4-5H0z" fill="#fff" /><path d="M5 5.500h14M5 9.500h14M5 13.500h8" stroke="#37302a" strokeWidth="1.300" /></svg>
          <Badge>1</Badge>
        </Notifications>
        <DesktopEdge />
      </Taskbar>
    </Screen>
  );
}
